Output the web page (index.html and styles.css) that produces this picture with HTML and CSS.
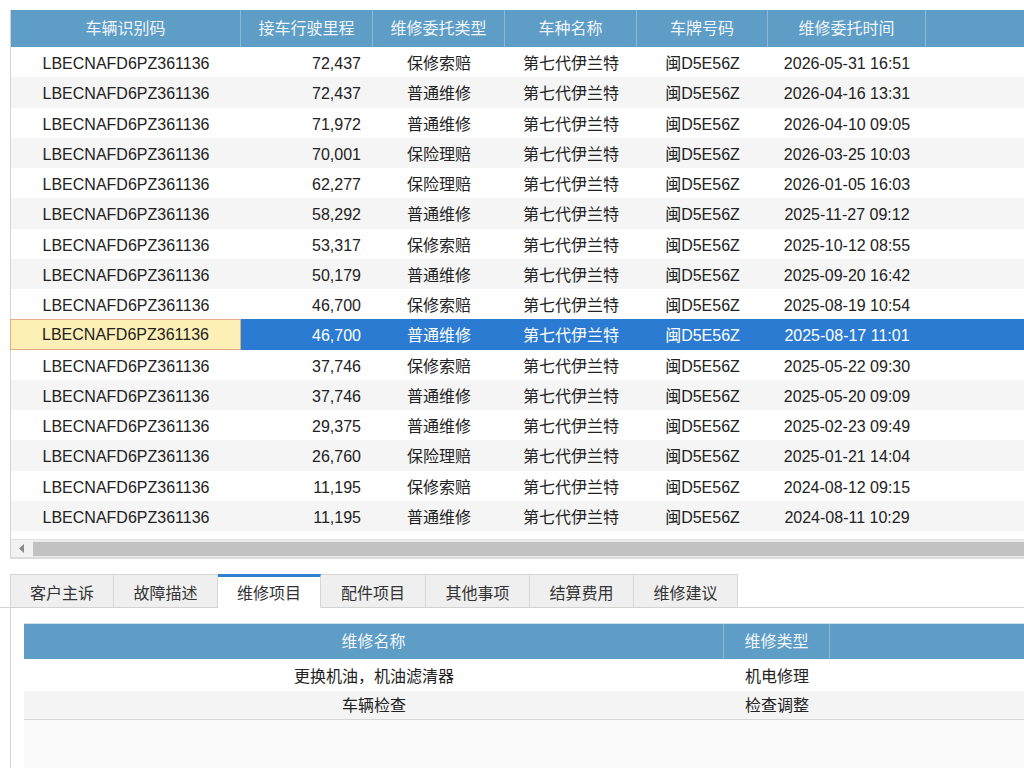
FILE: index.html
```html
<!DOCTYPE html>
<html lang="zh-CN">
<head>
<meta charset="utf-8">
<title>维修记录</title>
<link rel="stylesheet" href="styles.css">
</head>
<body>
<div class="grid">
  <div class="row head">
    <div class="c">车辆识别码</div>
    <div class="c">接车行驶里程</div>
    <div class="c">维修委托类型</div>
    <div class="c">车种名称</div>
    <div class="c">车牌号码</div>
    <div class="c">维修委托时间</div>
    <div class="c"></div>
  </div>
  <div class="row"><div class="c">LBECNAFD6PZ361136</div><div class="c num">72,437</div><div class="c">保修索赔</div><div class="c">第七代伊兰特</div><div class="c">闽D5E56Z</div><div class="c">2026-05-31 16:51</div><div class="c"></div></div>
  <div class="row alt"><div class="c">LBECNAFD6PZ361136</div><div class="c num">72,437</div><div class="c">普通维修</div><div class="c">第七代伊兰特</div><div class="c">闽D5E56Z</div><div class="c">2026-04-16 13:31</div><div class="c"></div></div>
  <div class="row"><div class="c">LBECNAFD6PZ361136</div><div class="c num">71,972</div><div class="c">普通维修</div><div class="c">第七代伊兰特</div><div class="c">闽D5E56Z</div><div class="c">2026-04-10 09:05</div><div class="c"></div></div>
  <div class="row alt"><div class="c">LBECNAFD6PZ361136</div><div class="c num">70,001</div><div class="c">保险理赔</div><div class="c">第七代伊兰特</div><div class="c">闽D5E56Z</div><div class="c">2026-03-25 10:03</div><div class="c"></div></div>
  <div class="row"><div class="c">LBECNAFD6PZ361136</div><div class="c num">62,277</div><div class="c">保险理赔</div><div class="c">第七代伊兰特</div><div class="c">闽D5E56Z</div><div class="c">2026-01-05 16:03</div><div class="c"></div></div>
  <div class="row alt"><div class="c">LBECNAFD6PZ361136</div><div class="c num">58,292</div><div class="c">普通维修</div><div class="c">第七代伊兰特</div><div class="c">闽D5E56Z</div><div class="c">2025-11-27 09:12</div><div class="c"></div></div>
  <div class="row"><div class="c">LBECNAFD6PZ361136</div><div class="c num">53,317</div><div class="c">保修索赔</div><div class="c">第七代伊兰特</div><div class="c">闽D5E56Z</div><div class="c">2025-10-12 08:55</div><div class="c"></div></div>
  <div class="row alt"><div class="c">LBECNAFD6PZ361136</div><div class="c num">50,179</div><div class="c">普通维修</div><div class="c">第七代伊兰特</div><div class="c">闽D5E56Z</div><div class="c">2025-09-20 16:42</div><div class="c"></div></div>
  <div class="row"><div class="c">LBECNAFD6PZ361136</div><div class="c num">46,700</div><div class="c">保修索赔</div><div class="c">第七代伊兰特</div><div class="c">闽D5E56Z</div><div class="c">2025-08-19 10:54</div><div class="c"></div></div>
  <div class="row sel"><div class="c focus">LBECNAFD6PZ361136</div><div class="c num">46,700</div><div class="c">普通维修</div><div class="c">第七代伊兰特</div><div class="c">闽D5E56Z</div><div class="c">2025-08-17 11:01</div><div class="c"></div></div>
  <div class="row"><div class="c">LBECNAFD6PZ361136</div><div class="c num">37,746</div><div class="c">保修索赔</div><div class="c">第七代伊兰特</div><div class="c">闽D5E56Z</div><div class="c">2025-05-22 09:30</div><div class="c"></div></div>
  <div class="row alt"><div class="c">LBECNAFD6PZ361136</div><div class="c num">37,746</div><div class="c">普通维修</div><div class="c">第七代伊兰特</div><div class="c">闽D5E56Z</div><div class="c">2025-05-20 09:09</div><div class="c"></div></div>
  <div class="row"><div class="c">LBECNAFD6PZ361136</div><div class="c num">29,375</div><div class="c">普通维修</div><div class="c">第七代伊兰特</div><div class="c">闽D5E56Z</div><div class="c">2025-02-23 09:49</div><div class="c"></div></div>
  <div class="row alt"><div class="c">LBECNAFD6PZ361136</div><div class="c num">26,760</div><div class="c">保险理赔</div><div class="c">第七代伊兰特</div><div class="c">闽D5E56Z</div><div class="c">2025-01-21 14:04</div><div class="c"></div></div>
  <div class="row"><div class="c">LBECNAFD6PZ361136</div><div class="c num">11,195</div><div class="c">保修索赔</div><div class="c">第七代伊兰特</div><div class="c">闽D5E56Z</div><div class="c">2024-08-12 09:15</div><div class="c"></div></div>
  <div class="row alt"><div class="c">LBECNAFD6PZ361136</div><div class="c num">11,195</div><div class="c">普通维修</div><div class="c">第七代伊兰特</div><div class="c">闽D5E56Z</div><div class="c">2024-08-11 10:29</div><div class="c"></div></div>
  <div class="spacer"></div>
  <div class="hscroll">
    <div class="arrow"><svg width="6" height="9" viewBox="0 0 6 9"><path d="M5 0 L0 4.5 L5 9 Z" fill="#8a8a8a"/></svg></div>
    <div class="thumb"></div>
  </div>
</div>

<div class="tabs">
  <div class="tab">客户主诉</div>
  <div class="tab">故障描述</div>
  <div class="tab active">维修项目</div>
  <div class="tab">配件项目</div>
  <div class="tab">其他事项</div>
  <div class="tab">结算费用</div>
  <div class="tab">维修建议</div>
</div>

<div class="panel">
  <div class="sub">
    <div class="srow shead"><div class="c">维修名称</div><div class="c">维修类型</div><div class="c"></div></div>
    <div class="srow r1"><div class="c">更换机油，机油滤清器</div><div class="c">机电修理</div><div class="c"></div></div>
    <div class="srow r2 alt"><div class="c">车辆检查</div><div class="c">检查调整</div><div class="c"></div></div>
    <div class="empty"></div>
  </div>
</div>
</body>
</html>
```

FILE: styles.css
```css
html, body {
  margin: 0;
  padding: 0;
  background: #ffffff;
  font-family: "Liberation Sans", "Noto Sans CJK SC", sans-serif;
  font-size: 16px;
  color: #222222;
  overflow: hidden;
  width: 1024px;
  height: 768px;
}

.grid {
  margin: 10px 0 0 10px;
  width: 1014px;
  border-left: 1px solid #d3d3d3;
  border-bottom: 2px solid #dcdcdc;
  box-sizing: border-box;
}

.row {
  display: grid;
  grid-template-columns: 230px 132px 132px 132px 131px 158px 1fr;
  height: 30.25px;
  background: #ffffff;
}

.row.alt { background: #f5f5f5; }

.row .c {
  text-align: center;
  white-space: nowrap;
  overflow: hidden;
  box-sizing: border-box;
  padding-top: 4px;
  line-height: 26.25px;
}

.row .num {
  text-align: right;
  padding-right: 12px;
}

.row.head {
  height: 37px;
  background: #5e9dc6;
  color: #f0f6fb;
}

.row.head .c {
  border-right: 1px solid #8bbad9;
  text-align: center;
  padding-top: 1px;
  line-height: 36px;
}

.row.head .c:last-child { border-right: none; }

.row.sel {
  background: #2b7bd3;
  color: #ffffff;
}

.row.sel .focus {
  background: #fdf0b6;
  color: #222222;
  border: 1px solid #e7ad80;
  padding-top: 3px;
  line-height: 24.25px;
  margin-left: -1px;
}

.spacer {
  height: 8px;
  background: #ffffff;
}

.hscroll {
  display: flex;
  height: 17px;
  background: #ececec;
  border-top: 1px solid #e2e2e2;
}

.hscroll .arrow {
  width: 22px;
  display: flex;
  align-items: center;
  justify-content: center;
  background: #f2f2f2;
}

.hscroll .thumb {
  flex: 1;
  background: #c2c2c2;
  margin: 2px 0 1px 0;
}

.tabs {
  display: flex;
  margin-top: 15px;
  padding-left: 10px;
  height: 33px;
  border-bottom: 1px solid #d3d3d3;
  box-sizing: content-box;
}

.tab {
  width: 104px;
  height: 33px;
  padding-top: 5px;
  line-height: 28px;
  text-align: center;
  background: #efefef;
  border: 1px solid #d6d6d6;
  border-bottom: none;
  border-left: none;
  box-sizing: border-box;
  color: #333333;
}

.tab:first-child {
  border-left: 1px solid #d6d6d6;
}

.tab.active {
  width: 103px;
  background: #ffffff;
  border-top: 3px solid #2f80cf;
  padding-top: 3px;
  height: 34px;
  margin-bottom: -1px;
}

.tab.active + .tab { width: 105px; }

.panel {
  margin-left: 10px;
  border-left: 1px solid #d3d3d3;
  padding: 15px 0 0 13px;
  height: 160px;
}

.sub {
  width: 1000px;
}

.srow {
  display: grid;
  grid-template-columns: 700px 106px 1fr;
  background: #ffffff;
  text-align: center;
}

.srow.shead {
  height: 35px;
  line-height: 35px;
  background: #5e9dc6;
  color: #f0f6fb;
  border-top: 1px solid #cfe0ec;
}

.srow.shead .c { border-right: 1px solid #8bbad9; }
.srow.shead .c:last-child { border-right: none; }

.srow.r1 { height: 32px; line-height: 36px; }
.srow.r2 { height: 28px; line-height: 30px; border-bottom: 1px solid #d6d6d6; }
.srow.alt { background: #f4f4f4; }

.empty {
  height: 60px;
  background: #fafafa;
}
```
